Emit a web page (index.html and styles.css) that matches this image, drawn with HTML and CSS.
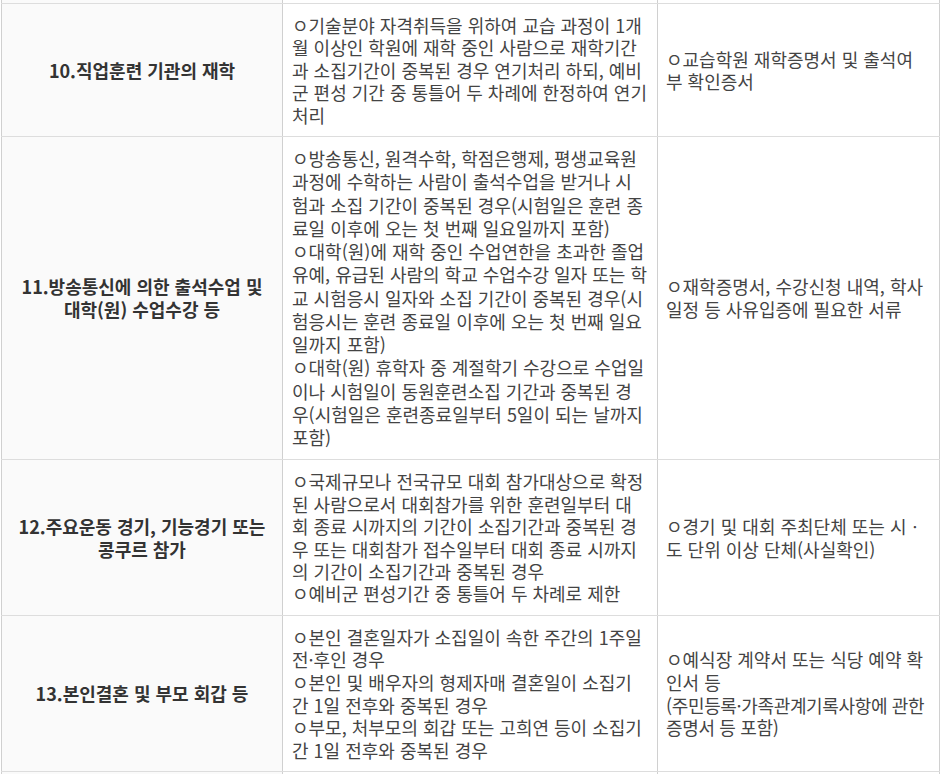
FILE: index.html
```html
<!DOCTYPE html>
<html lang="ko">
<head>
<meta charset="utf-8">
<title>예비군 훈련 연기 사유</title>
<link rel="stylesheet" href="styles.css">
</head>
<body>
<table class="reasons">
  <colgroup>
    <col class="col-name">
    <col class="col-desc">
    <col class="col-doc">
  </colgroup>
  <tbody>
    <tr class="row-cut-top">
      <th></th><td></td><td class="doc"></td>
    </tr>
    <tr class="row-a">
      <th>10.직업훈련 기관의 재학</th>
      <td>ㅇ기술분야 자격취득을 위하여 교습 과정이 1개월 이상인 학원에 재학 중인 사람으로 재학기간과 소집기간이 중복된 경우 연기처리 하되, 예비군 편성 기간 중 통틀어 두 차례에 한정하여 연기처리</td>
      <td class="doc">ㅇ교습학원 재학증명서 및 출석여부 확인증서</td>
    </tr>
    <tr class="row-b">
      <th>11.방송통신에 의한 출석수업 및 대학(원) 수업수강 등</th>
      <td>ㅇ방송통신, 원격수학, 학점은행제, 평생교육원 과정에 수학하는 사람이 출석수업을 받거나 시험과 소집 기간이 중복된 경우(시험일은 훈련 종료일 이후에 오는 첫 번째 일요일까지 포함)<br>ㅇ대학(원)에 재학 중인 수업연한을 초과한 졸업유예, 유급된 사람의 학교 수업수강 일자 또는 학교 시험응시 일자와 소집 기간이 중복된 경우(시험응시는 훈련 종료일 이후에 오는 첫 번째 일요일까지 포함)<br>ㅇ대학(원) 휴학자 중 계절학기 수강으로 수업일이나 시험일이 동원훈련소집 기간과 중복된 경우(시험일은 훈련종료일부터 5일이 되는 날까지 포함)</td>
      <td class="doc">ㅇ재학증명서, 수강신청 내역, 학사일정 등 사유입증에 필요한 서류</td>
    </tr>
    <tr class="row-c">
      <th>12.주요운동 경기, 기능경기 또는 콩쿠르 참가</th>
      <td>ㅇ국제규모나 전국규모 대회 참가대상으로 확정된 사람으로서 대회참가를 위한 훈련일부터 대회 종료 시까지의 기간이 소집기간과 중복된 경우 또는 대회참가 접수일부터 대회 종료 시까지의 기간이 소집기간과 중복된 경우<br>ㅇ예비군 편성기간 중 통틀어 두 차례로 제한</td>
      <td class="doc">ㅇ경기 및 대회 주최단체 또는 시ㆍ도 단위 이상 단체(사실확인)</td>
    </tr>
    <tr class="row-d">
      <th>13.본인결혼 및 부모 회갑 등</th>
      <td>ㅇ본인 결혼일자가 소집일이 속한 주간의 1주일 전·후인 경우<br>ㅇ본인 및 배우자의 형제자매 결혼일이 소집기간 1일 전후와 중복된 경우<br>ㅇ부모, 처부모의 회갑 또는 고희연 등이 소집기간 1일 전후와 중복된 경우</td>
      <td class="doc">ㅇ예식장 계약서 또는 식당 예약 확인서 등<br><span class="note">(주민등록·가족관계기록사항에 관한 증명서 등 포함)</span></td>
    </tr>
    <tr class="row-next">
      <th></th><td></td><td class="doc"></td>
    </tr>
  </tbody>
</table>
</body>
</html>
```

FILE: styles.css
```css
html, body {
  margin: 0;
  padding: 0;
  background: #ffffff;
}

body {
  font-family: "Noto Sans CJK KR", "Noto Sans", sans-serif;
  color: #444444;
  font-size: 18px;
  overflow: hidden;
}

.reasons {
  border-collapse: collapse;
  width: 938px;
  margin-left: 1px;
  table-layout: fixed;
}

.col-name { width: 281px; }
.col-desc { width: 375px; }
.col-doc  { width: 282px; }

.reasons th,
.reasons td {
  border: 1px solid #d0d0d0;
  border-top-color: #dddddd;
  border-bottom-color: #dddddd;
  padding: 10px 9px 10px 9px;
  vertical-align: middle;
  text-align: left;
  line-height: 22.8px;
}

.reasons td.doc {
  padding-left: 8px;
  padding-right: 10px;
}

.note {
  letter-spacing: -0.35px;
}

.reasons th {
  background: #fafafa;
  color: #333333;
  font-weight: 700;
  text-align: center;
  padding-left: 14px;
  padding-right: 14px;
}

.row-cut-top th,
.row-cut-top td,
.row-cut-top td.doc {
  padding: 0;
  height: 3px;
  line-height: 0;
  border-top: none;
}

.row-a th, .row-a td { line-height: 22.4px; }
.row-b th, .row-b td { line-height: 23.25px; }
.row-c th, .row-c td { line-height: 22.4px; }
.row-d th, .row-d td { line-height: 22.6px; }

.row-next th,
.row-next td {
  height: 40px;
}
```
